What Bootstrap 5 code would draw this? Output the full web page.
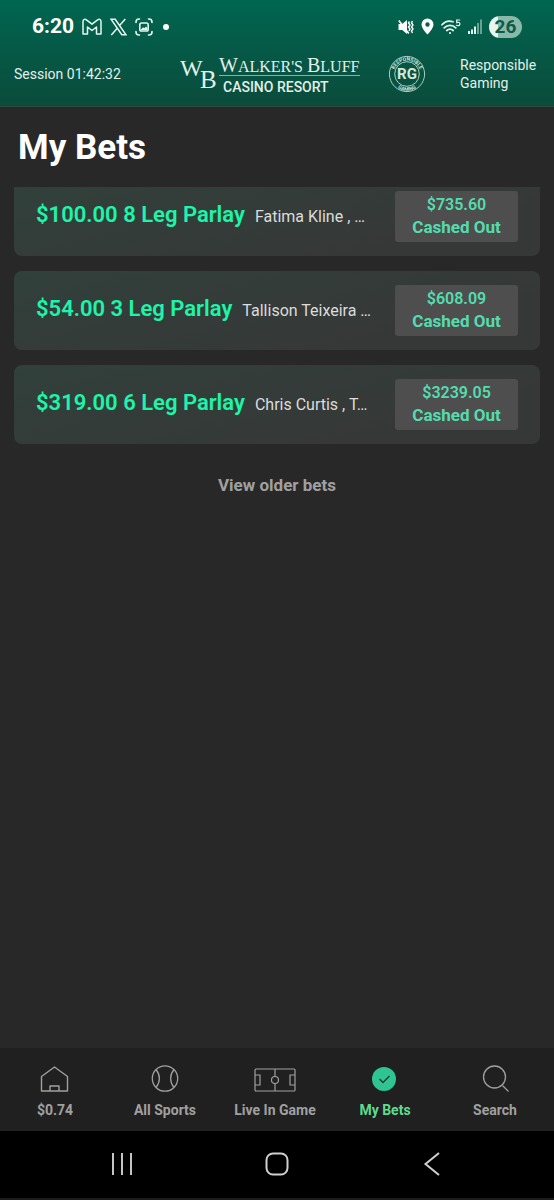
<!DOCTYPE html>
<html lang="en" data-bs-theme="dark">
<head>
<meta charset="utf-8">
<meta name="viewport" content="width=device-width, initial-scale=1">
<title>My Bets</title>
<link href="https://cdn.jsdelivr.net/npm/bootstrap@5.3.0/dist/css/bootstrap.min.css" rel="stylesheet">
<style>
  body { font-family: Roboto, sans-serif; background: #282828; color: #fff; }
  svg { display: block; flex: none; }
  .app-header { background: linear-gradient(#006650, #0b4b3b); height: 107px; border-bottom: 1px solid #2b4a40; }
  .status-bar { height: 53px; padding: 0 32px; font-size: 21px; }
  .status-icons { gap: 7px; }
  .notification-dot { width: 6px; height: 6px; margin-left: 2px; }
  .battery { width: 33px; height: 22px; border-radius: 11px; font-size: 19px; line-height: 22px; color: #0b5c48; background: linear-gradient(90deg, #e9f5f1 26%, #8ab9aa 26%); }
  .brand-bar { height: 42px; padding: 0 14px; font-size: 14px; line-height: 18px; color: #e2f0ea; }
  .brand-bar > * { flex: none; }
  .rg-seal { margin: 0 34px 0 26px; }
  .help-link { width: 80px; color: #e2f0ea; }
  .page-title { font-size: 35px; line-height: 44px; margin: 19px 18px 17px; }
  .bet-list { padding: 0 14px; gap: 15px; }
  .bet { height: 79px; padding: 0 22px; border-radius: 8px; background: linear-gradient(165deg, #31403b, #363837 75%); }
  .bet-cut { height: 69px; padding-bottom: 10px; border-radius: 0 0 8px 8px; }
  .bet-summary { gap: 10px; padding-bottom: 3px; }
  .bet-name { font-size: 22px; line-height: 28px; font-weight: 600; color: #1df5aa; }
  .bet-legs { font-size: 16px; color: #dcdcdc; }
  .cash-btn { width: 123px; height: 51px; border-radius: 3px; background: #4e4e4e; color: #55dcae; font-weight: 700; font-size: 17px; line-height: 22px; }
  .cash-btn { padding: 0 0 2px; }
  .cash-btn small { font-size: 16px; line-height: 22px; font-weight: 600; }
  .older-btn { font-size: 17px; line-height: 24px; font-weight: 700; color: #a0a0a0; margin-top: 29px; }
  .tab-bar { height: 83px; background: #202020; padding-right: 4px; }
  .tab-link { color: #a0a0a0; font-size: 14px; line-height: 18px; font-weight: 700; padding-top: 15px; gap: 6px; flex: 1 1 0; }
  .tab-link.active { color: #5fdb90; }
  .system-bar { height: 69px; padding-bottom: 2px; gap: 127px; background: #000; border-bottom: 2px solid #1c1c1c; }
</style>
</head>
<body>
<div class="d-flex flex-column min-vh-100">
  <header class="app-header">
    <div class="status-bar d-flex align-items-center justify-content-between">
      <div class="d-flex align-items-center gap-2">
        <span class="fw-bold">6:20</span>
        <svg width="20" height="18" viewBox="0 0 20 18" fill="none" stroke="#e6f7f1" stroke-width="1.5" stroke-linejoin="round"><path d="M1 3.500C1 1 3.200.8 4.400 1.800L10 6.200l5.600-4.400C16.800.8 19 1 19 3.500V16h-4.500V9L10 12.500 5.500 9v7H1z"/></svg>
        <svg width="17" height="18" viewBox="0 0 17 18" fill="none" stroke="#e6f7f1" stroke-width="1.500"><path d="M1 1.200h4.200L16 16.800h-4.200zM15.300 1 9.600 7.600M7.300 10.200 1.300 17"/></svg>
        <svg width="18" height="18" viewBox="0 0 18 18" fill="none" stroke="#e6f7f1" stroke-width="1.600" stroke-linecap="round"><path d="M1 4.500V4a3 3 0 0 1 3-3h.5M13.500 1h.5a3 3 0 0 1 3 3v.5M17 13.500v.5a3 3 0 0 1-3 3h-.5M4.500 17H4a3 3 0 0 1-3-3v-.5"/><rect x="4.800" y="5" width="8.400" height="8" rx="1.800"/><path d="m6 11.500 2-2.200 1.300 1L11 8.500l1.300 1.500v2H6z" fill="#e6f7f1" stroke="none"/></svg>
        <span class="notification-dot rounded-circle bg-white"></span>
      </div>
      <div class="status-icons d-flex align-items-center">
        <svg width="16" height="18" viewBox="0 0 16 18" fill="none" stroke="#fff"><path d="M.5 6h3.700L9 2v14l-4.800-4H.5z" fill="#fff" stroke="none"/><path d="m.8 2.500 10 13" stroke="#fff" stroke-width="1.600"/><path d="M11.500 3.500 10.500 5l1.500 2-1.500 2 1.500 2-1 2M14.500 3 13.500 5 15 7l-1.500 2L15 11l-1.500 2 1 2" stroke-width="1.400"/></svg>
        <svg width="13" height="17" viewBox="0 0 13 17"><path d="M6.500.5a6 6 0 0 0-6 6c0 4 6 10 6 10s6-6 6-10a6 6 0 0 0-6-6zm0 3.800a2.200 2.200 0 1 1 0 4.400 2.200 2.200 0 0 1 0-4.400z" fill="#fff" fill-rule="evenodd"/></svg>
        <svg width="20" height="18" viewBox="0 0 20 18" fill="none" stroke="#e6f7f1" stroke-width="1.700" stroke-linecap="round"><path d="M1 6.800C4 3.300 8 2.200 12 3.800M3.200 9.800c3.300-3.300 8.300-3.300 11.600 0M5.800 12.500c2-1.800 4.400-1.800 6.400 0"/><circle cx="9" cy="15" r="1" fill="#fff" stroke="none"/><path d="M18.700 2h-3v2.600c2.200-.8 3.400 0 3.200 1.500-.1 1.500-2 2-3.500 1.200" stroke-width="1.200"/></svg>
        <svg width="14" height="16" viewBox="0 0 14 16"><path d="M0 12h2v3H0zM3 10.500h2V15H3zM6 7.500h2V15H6z" fill="#e6f7f1"/><path d="M9 4h2v11H9zM12 .5h2V15h-2z" fill="#6aa291"/></svg>
        <span class="battery fw-bold text-center">26</span>
      </div>
    </div>
    <div class="brand-bar d-flex align-items-center">
      <span>Session 01:42:32</span>
      <svg class="ms-auto" width="182" height="40" viewBox="0 0 182 40" fill="#e2f0ea" role="img" aria-label="Walker's Bluff Casino Resort">
        <g font-family="'Liberation Serif', serif"><text x="0" y="22" font-size="24">W</text><text x="20" y="34" font-size="25">B</text>
        <text x="39" y="18" font-size="20">W<tspan font-size="16">ALKER'S </tspan>B<tspan font-size="16">LUFF</tspan></text></g>
        <path d="M39 21.500h141" stroke="#80b5a2" stroke-width="1"/>
        <text x="43" y="38" font-size="14" font-weight="500" font-family="Roboto, sans-serif">CASINO RESORT</text>
      </svg>
      <svg class="rg-seal" width="38" height="38" viewBox="0 0 38 38" fill="none" stroke="#a9cfc1" role="img" aria-label="Responsible Gaming">
        <defs><path id="arc-top" d="M5.700 19a13.300 13.300 0 0 1 26.600 0"/><path id="arc-bottom" d="M2.200 19a16.800 16.800 0 0 0 33.600 0"/></defs>
        <circle cx="19" cy="19" r="17.600"/><circle cx="19" cy="19" r="12.300"/>
        <g fill="#d3e8df" stroke="none" text-anchor="middle" font-weight="700" font-family="Roboto, sans-serif"><text x="19" y="24" font-size="15">RG</text>
        <text font-size="5"><textPath href="#arc-top" startOffset="50%">RESPONSIBLE</textPath></text><text font-size="5"><textPath href="#arc-bottom" startOffset="50%">GAMING</textPath></text></g>
      </svg>
      <a class="help-link text-decoration-none" href="#responsible">Responsible Gaming</a>
    </div>
  </header>

  <main class="flex-grow-1">
    <h1 class="page-title fw-bold">My Bets</h1>
    <div class="bet-list d-flex flex-column">
      <article class="bet bet-cut d-flex align-items-center justify-content-between">
        <div class="bet-summary d-flex align-items-baseline text-nowrap"><span class="bet-name">$100.00 8 Leg Parlay</span><span class="bet-legs">Fatima Kline , …</span></div>
        <button class="cash-btn btn border-0" type="button"><small class="d-block">$735.60</small>Cashed Out</button>
      </article>
      <article class="bet d-flex align-items-center justify-content-between">
        <div class="bet-summary d-flex align-items-baseline text-nowrap"><span class="bet-name">$54.00 3 Leg Parlay</span><span class="bet-legs">Tallison Teixeira …</span></div>
        <button class="cash-btn btn border-0" type="button"><small class="d-block">$608.09</small>Cashed Out</button>
      </article>
      <article class="bet d-flex align-items-center justify-content-between">
        <div class="bet-summary d-flex align-items-baseline text-nowrap"><span class="bet-name">$319.00 6 Leg Parlay</span><span class="bet-legs">Chris Curtis , T…</span></div>
        <button class="cash-btn btn border-0" type="button"><small class="d-block">$3239.05</small>Cashed Out</button>
      </article>
    </div>
    <button class="older-btn btn border-0 p-0 d-block mx-auto" type="button">View older bets</button>
  </main>

  <footer class="sticky-bottom">
    <nav class="tab-bar d-flex" aria-label="Main">
      <a class="tab-link d-flex flex-column align-items-center text-decoration-none" href="#account">
        <svg width="32" height="32" viewBox="0 0 32 32" fill="none" stroke="#a0a0a0" stroke-width="1.400" stroke-linejoin="round"><path d="M2.500 28V13.500L15.500 4l13 9.500V28zM11 28v-5h9v5"/></svg>$0.74</a>
      <a class="tab-link d-flex flex-column align-items-center text-decoration-none" href="#sports">
        <svg width="32" height="32" viewBox="0 0 32 32" fill="none" stroke="#a0a0a0" stroke-width="1.300"><circle cx="16" cy="15.500" r="12.700"/><path d="M7 6.500c4.500 5.500 4.500 12.500 0 18M25 6.500c-4.500 5.500-4.500 12.500 0 18"/></svg>All Sports</a>
      <a class="tab-link d-flex flex-column align-items-center text-decoration-none" href="#live">
        <svg width="42" height="32" viewBox="0 0 42 32" fill="none" stroke="#a0a0a0" stroke-width="1.200"><rect x="1" y="6" width="40" height="22" rx="1"/><path d="M1 12h5v10H1M41 12h-5v10h5M21 6v7.500M21 20.500V28"/><circle cx="21" cy="17" r="3.500"/></svg>Live In Game</a>
      <a class="tab-link active d-flex flex-column align-items-center text-decoration-none" href="#bets" aria-current="page">
        <svg width="32" height="32" viewBox="0 0 32 32"><circle cx="15" cy="16" r="12" fill="#2fc593"/><path d="m10.500 16 3.500 3.500 6.500-6.500" fill="none" stroke="#203a31" stroke-width="1.400"/></svg>My Bets</a>
      <a class="tab-link d-flex flex-column align-items-center text-decoration-none" href="#search">
        <svg width="32" height="32" viewBox="0 0 32 32" fill="none" stroke="#a0a0a0" stroke-width="1.300"><circle cx="15.500" cy="14" r="11"/><path d="m23.500 22.500 6 6"/></svg>Search</a>
    </nav>
    <div class="system-bar d-flex align-items-center justify-content-center">
      <button class="btn border-0 p-0" type="button" aria-label="Recent apps"><svg width="28" height="28" viewBox="0 0 28 28" stroke="#c4c4c4" stroke-width="2"><path d="M5 3v22M14 3v22M23 3v22"/></svg></button>
      <button class="btn border-0 p-0" type="button" aria-label="Home"><svg width="28" height="28" viewBox="0 0 28 28" fill="none" stroke="#d0d0d0" stroke-width="2"><rect x="3.500" y="3.500" width="21" height="21" rx="6.500"/></svg></button>
      <button class="btn border-0 p-0" type="button" aria-label="Back"><svg width="28" height="28" viewBox="0 0 28 28" fill="none" stroke="#d0d0d0" stroke-width="2"><path d="M21 3 7.500 14 21 25"/></svg></button>
    </div>
  </footer>
</div>
<script src="https://cdn.jsdelivr.net/npm/bootstrap@5.3.0/dist/js/bootstrap.bundle.min.js"></script>
</body>
</html>
